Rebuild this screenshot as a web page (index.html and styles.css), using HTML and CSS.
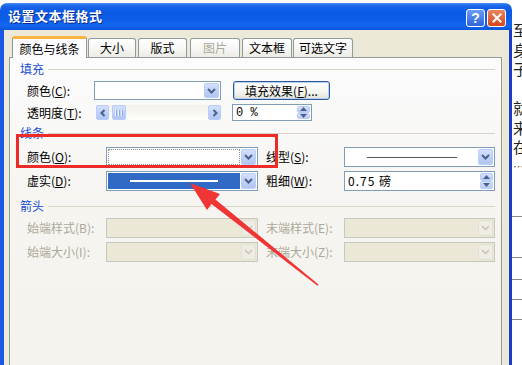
FILE: index.html
```html
<!DOCTYPE html>
<html lang="zh-CN">
<head>
<meta charset="utf-8">
<title>设置文本框格式</title>
<link rel="stylesheet" href="styles.css">
</head>
<body>
<div class="screen">
  <div class="dialog">
    <div class="titlebar">
      <span class="title">设置文本框格式</span>
      <span class="tbtn help">?</span>
      <span class="tbtn close"><svg width="10" height="10" viewBox="0 0 10 10"><path d="M1.5 1.5 L8.5 8.5 M8.5 1.5 L1.5 8.5" stroke="#fff" stroke-width="2" stroke-linecap="square"/></svg></span>
    </div>
    <div class="frame">
      <div class="tabs">
        <div class="tab active t1">颜色与线条</div>
        <div class="tab t2">大小</div>
        <div class="tab t3">版式</div>
        <div class="tab t4 off">图片</div>
        <div class="tab t5">文本框</div>
        <div class="tab t6">可选文字</div>
      </div>
      <div class="panel">
        <div class="sec"><span>填充</span><i></i></div>
        <div class="row fill1">
          <span class="l1">颜色(<u>C</u>):</span>
          <div class="combo cw1"><div class="field"></div><div class="drop"><svg width="9" height="6" viewBox="0 0 9 6"><path d="M1 1 L4.5 4.5 L8 1" fill="none" stroke="#4d6185" stroke-width="2"/></svg></div></div>
          <div class="btn">填充效果(<u>F</u>)...</div>
        </div>
        <div class="row fill2">
          <span class="l1">透明度(<u>T</u>):</span>
          <div class="scroll">
            <div class="sb"><svg width="6" height="8" viewBox="0 0 6 8"><path d="M4.5 1 L1.5 4 L4.5 7" fill="none" stroke="#4d6185" stroke-width="2"/></svg></div>
            <div class="thumb"><i></i><i></i><i></i></div>
            <div class="track"></div>
            <div class="sb"><svg width="6" height="8" viewBox="0 0 6 8"><path d="M1.5 1 L4.5 4 L1.5 7" fill="none" stroke="#4d6185" stroke-width="2"/></svg></div>
          </div>
          <div class="spin sw1"><div class="val">0 %</div><div class="arrows"><span><svg width="7" height="4" viewBox="0 0 7 4"><path d="M0 4 L3.5 0 L7 4Z" fill="#4d6185"/></svg></span><span><svg width="7" height="4" viewBox="0 0 7 4"><path d="M0 0 L3.5 4 L7 0Z" fill="#4d6185"/></svg></span></div></div>
        </div>

        <div class="sec sec2"><span>线条</span><i></i></div>
        <div class="row line1">
          <span class="l2">颜色(<u>O</u>):</span>
          <div class="combo cw2"><div class="field dotted"></div><div class="drop"><svg width="9" height="6" viewBox="0 0 9 6"><path d="M1 1 L4.5 4.5 L8 1" fill="none" stroke="#4d6185" stroke-width="2"/></svg></div></div>
          <span class="l3">线型(<u>S</u>):</span>
          <div class="combo cw3"><div class="field linefield"><i class="ln"></i></div><div class="drop"><svg width="9" height="6" viewBox="0 0 9 6"><path d="M1 1 L4.5 4.5 L8 1" fill="none" stroke="#4d6185" stroke-width="2"/></svg></div></div>
        </div>
        <div class="row line2">
          <span class="l2">虚实(<u>D</u>):</span>
          <div class="combo cw2"><div class="field selected"><i class="dash"></i></div><div class="drop"><svg width="9" height="6" viewBox="0 0 9 6"><path d="M1 1 L4.5 4.5 L8 1" fill="none" stroke="#4d6185" stroke-width="2"/></svg></div></div>
          <span class="l3">粗细(<u>W</u>):</span>
          <div class="spin sw2"><div class="val">0.75 磅</div><div class="arrows"><span><svg width="7" height="4" viewBox="0 0 7 4"><path d="M0 4 L3.5 0 L7 4Z" fill="#4d6185"/></svg></span><span><svg width="7" height="4" viewBox="0 0 7 4"><path d="M0 0 L3.5 4 L7 0Z" fill="#4d6185"/></svg></span></div></div>
        </div>

        <div class="sec sec3"><span>箭头</span><i></i></div>
        <div class="row arr1 dis">
          <span class="l2">始端样式(B):</span>
          <div class="combo cw2"><div class="field"></div><div class="drop"><svg width="9" height="6" viewBox="0 0 9 6"><path d="M1 1 L4.5 4.5 L8 1" fill="none" stroke="#c6c3b5" stroke-width="1.5"/></svg></div></div>
          <span class="l3">末端样式(E):</span>
          <div class="combo cw3"><div class="field"></div><div class="drop"><svg width="9" height="6" viewBox="0 0 9 6"><path d="M1 1 L4.5 4.5 L8 1" fill="none" stroke="#c6c3b5" stroke-width="1.5"/></svg></div></div>
        </div>
        <div class="row arr2 dis">
          <span class="l2">始端大小(I):</span>
          <div class="combo cw2"><div class="field"></div><div class="drop"><svg width="9" height="6" viewBox="0 0 9 6"><path d="M1 1 L4.5 4.5 L8 1" fill="none" stroke="#c6c3b5" stroke-width="1.5"/></svg></div></div>
          <span class="l3">末端大小(Z):</span>
          <div class="combo cw3"><div class="field"></div><div class="drop"><svg width="9" height="6" viewBox="0 0 9 6"><path d="M1 1 L4.5 4.5 L8 1" fill="none" stroke="#c6c3b5" stroke-width="1.5"/></svg></div></div>
        </div>
      </div>
    </div>
  </div>
  <div class="side">
    <div class="sidetext">
      <p>至</p><p>身</p><p>子</p><p></p><p>就</p><p>来</p><p>在</p><p class="dots">…</p>
    </div>
    <div class="hr h1"></div>
    <div class="hr h2"></div>
    <div class="hr h3"></div>
    <div class="hr h4"></div>
    <div class="hr h5"></div>
  </div>
  <div class="redbox"></div>
  <svg class="arrow" width="522" height="365" viewBox="0 0 522 365"><polygon points="190,183 220,194 215.5,199.5 318.5,284.5 317.5,285.8 211.5,204 207,210" fill="#f03535"/></svg>
</div>
</body>
</html>
```
FILE: styles.css
```css
* { box-sizing: border-box; }
html, body { margin: 0; padding: 0; }
body {
  width: 522px;
  height: 365px;
  overflow: hidden;
  background: #fff;
  font-family: "Noto Sans CJK SC", "Noto Sans", sans-serif;
  font-size: 12px;
  color: #000;
}
u { text-decoration: underline; text-underline-offset: 1px; }

.screen {
  position: relative;
  display: flex;
  height: 365px;
  overflow: hidden;
}

.dialog {
  flex: none;
  width: 512px;
  margin-top: 3px;
  display: flex;
  flex-direction: column;
}

.titlebar {
  height: 27px;
  flex: none;
  display: flex;
  align-items: flex-start;
  padding: 0 6px 0 8px;
  border-radius: 7px 7px 0 0;
  background: linear-gradient(to bottom, #4a8ff6 0%, #1a66ea 10%, #0a5ae4 30%, #0c5ce8 60%, #1466ef 82%, #0a55dc 100%);
}
.title {
  flex: 1;
  color: #fff;
  font-weight: bold;
  font-size: 13px;
  line-height: 26px;
  letter-spacing: 0.5px;
  text-shadow: 1px 1px 0 #0b2c8c;
}
.tbtn {
  width: 19px;
  height: 18px;
  margin-top: 6px;
  border: 1px solid #fff;
  border-radius: 3px;
  display: flex;
  align-items: center;
  justify-content: center;
}
.help {
  background: linear-gradient(#6a9cf7, #2f64de);
  color: #fff;
  font: bold 14px "Liberation Sans", sans-serif;
}
.close {
  margin-left: 2px;
  background: linear-gradient(#ea8560, #d8451c);
}

.frame {
  flex: 1;
  background: #ece9d8;
  border-left: 4px solid #1b58e6;
  border-right: 3px solid #1a3cc8;
  padding: 6px 7px 0 5px;
}

.tabs {
  display: flex;
  align-items: flex-end;
  height: 21px;
  padding-left: 3px;
  position: relative;
  z-index: 1;
}
.tab {
  height: 19px;
  border: 1px solid #919b9c;
  border-bottom: none;
  border-radius: 3px 3px 0 0;
  background: linear-gradient(#ffffff, #f7f7f5 50%, #ecebe5);
  display: flex;
  align-items: center;
  justify-content: center;
  line-height: 1;
}
.tab.active {
  height: 22px;
  margin-bottom: -1px;
  background: #fcfcfe;
  border-top: 3px solid #f8b440;
}
.tab.off { color: #aca899; }
.t1 { width: 75px; }
.t2 { width: 48px; margin-left: 1px; }
.t3 { width: 49px; margin-left: 2px; }
.t4 { width: 50px; margin-left: 3px; }
.t5 { width: 50px; margin-left: 2px; }
.t6 { width: 60px; margin-left: 1px; }

.panel {
  height: 330px;
  border: 1px solid #919b9c;
  background: linear-gradient(#fcfcfd, #f6f5f1 40%, #f3f2ed);
  padding: 4px 6px 0 10px;
}

.sec {
  display: flex;
  align-items: center;
  height: 14px;
  color: #1a4fd0;
  line-height: 1;
}
.sec i {
  flex: 1;
  height: 1px;
  margin-left: 4px;
  background: #d6d5c8;
}
.sec2 { margin-top: 5px; }
.sec3 { margin-top: 8px; }

.row {
  display: flex;
  align-items: center;
  padding-left: 7px;
  line-height: 1;
}
.fill1 { margin-top: 5px; height: 19px; }
.fill2 { margin-top: 4px; height: 17px; }
.line1 { margin-top: 7px; height: 20px; }
.line2 { margin-top: 4px; height: 20px; }
.arr1 { margin-top: 5px; height: 20px; }
.arr2 { margin-top: 4px; height: 20px; }

.l1 { width: 67px; flex: none; }
.l2 { width: 79px; flex: none; }
.l3 { width: 78px; flex: none; margin-left: 8px; }
.dis { color: #aca899; }

.combo {
  display: flex;
  height: 100%;
  flex: none;
  border: 1px solid #7f9db9;
  background: #fff;
  padding: 1px;
}
.cw1 { width: 127px; }
.cw2 { width: 152px; }
.cw3 { width: 151px; }
.combo .field { flex: 1; position: relative; display: flex; align-items: center; justify-content: center; }
.field.dotted { border: 1px dotted #8c8c8c; margin-right: 1px; }
.field.selected { background: #316ac5; margin-right: 1px; justify-content: flex-start; }
.dash { display: block; width: 88px; height: 2px; margin-left: 22px; background: #fff; }
.ln { display: block; width: 90px; height: 1px; background: #555; }
.drop {
  width: 15px;
  flex: none;
  border: 1px solid #bacdf6;
  border-radius: 2px;
  background: linear-gradient(#d4e0fd, #bccff8 60%, #b1c6f5);
  display: flex;
  align-items: center;
  justify-content: center;
}
.dis .combo { border-color: #c9c7ba; background: #ebe8d8; }
.dis .drop { border-color: #e2e0d4; background: #efede3; }

.btn {
  margin-left: 12px;
  width: 97px;
  height: 19px;
  flex: none;
  border: 1px solid #2e5a9c;
  border-radius: 3px;
  background: linear-gradient(#ffffff, #f4f4f0 60%, #e2e0d6);
  box-shadow: inset 0 0 0 1px #b8cff4;
  display: flex;
  align-items: center;
  justify-content: center;
}

.scroll {
  margin-left: 2px;
  width: 125px;
  height: 15px;
  flex: none;
  display: flex;
  background: linear-gradient(#f1f0ea, #fefefb);
}
.sb, .thumb {
  width: 13px;
  flex: none;
  border: 1px solid #bacdf6;
  border-radius: 2px;
  background: linear-gradient(#d4e0fd, #bccff8 60%, #b1c6f5);
  display: flex;
  align-items: center;
  justify-content: center;
}
.thumb { width: 14px; margin-left: 3px; gap: 1px; }
.thumb i { display: block; width: 1px; height: 6px; background: #eef3fe; box-shadow: 1px 0 0 #8faae4; margin-right: 1px; }
.track { flex: 1; }

.spin {
  display: flex;
  height: 100%;
  flex: none;
  border: 1px solid #7f9db9;
  background: #fff;
  padding: 1px;
}
.sw1 { width: 80px; margin-left: 11px; }
.sw2 { width: 151px; }
.spin .val { flex: 1; padding-left: 2px; display: flex; align-items: center; font-family: "Liberation Mono", "Noto Sans CJK SC", monospace; font-size: 12px; }
.sw2 .val { font-family: "Noto Sans CJK SC", sans-serif; letter-spacing: 1px; }
.arrows { width: 13px; flex: none; display: flex; flex-direction: column; }
.arrows span {
  flex: 1;
  border: 1px solid #bacdf6;
  border-radius: 2px;
  background: linear-gradient(#d4e0fd, #b6cbf6);
  display: flex;
  align-items: center;
  justify-content: center;
}

.side {
  flex: 1;
  overflow: hidden;
  background: #fff;
}
.sidetext {
  padding-top: 20px;
  padding-left: 1px;
  font-size: 15px;
  line-height: 19.5px;
  color: #222;
  white-space: nowrap;
}
.sidetext p { margin: 0; height: 19.5px; }
.sidetext .dots { font-size: 11px; color: #555; }
.hr { height: 1px; background: #8a8a8a; }
.h1 { margin-top: 40px; }
.h2 { margin-top: 40px; }
.h3 { margin-top: 21px; }
.h4 { margin-top: 19px; }
.h5 { margin-top: 19px; }

.redbox {
  position: absolute;
  left: 16px;
  top: 134px;
  width: 262px;
  height: 34px;
  border: 3px solid #ee2b2b;
}
.arrow {
  position: absolute;
  left: 0;
  top: 0;
  pointer-events: none;
}
```
